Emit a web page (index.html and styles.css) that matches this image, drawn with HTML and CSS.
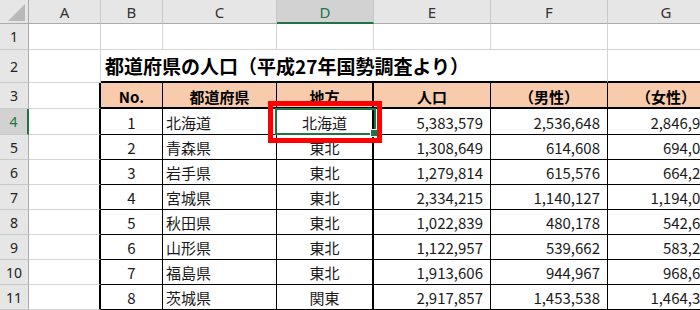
FILE: index.html
```html
<!DOCTYPE html>
<html lang="ja">
<head>
<meta charset="utf-8">
<title>都道府県の人口</title>
<link rel="stylesheet" href="styles.css">
</head>
<body>
<div class="sheet">
  <div class="corner"><span class="tri"></span></div>
  <div class="ch">A</div>
  <div class="ch">B</div>
  <div class="ch">C</div>
  <div class="ch sel">D</div>
  <div class="ch">E</div>
  <div class="ch">F</div>
  <div class="ch">G</div>

  <div class="rh">1</div>
  <div class="c"></div><div class="c"></div><div class="c"></div><div class="c"></div><div class="c"></div><div class="c"></div><div class="c"></div>

  <div class="rh r2">2</div>
  <div class="c r2"></div>
  <div class="c r2 title">都道府県の人口（平成27年国勢調査より）</div>
  <div class="c r2 top"></div>
  <div class="c r2 top"></div>

  <div class="rh">3</div>
  <div class="c edge"></div>
  <div class="t th">No.</div>
  <div class="t th">都道府県</div>
  <div class="t th thick">地方</div>
  <div class="t th">人口</div>
  <div class="t th">（男性）</div>
  <div class="t th">（女性）</div>

  <div class="rh sel r4">4</div>
  <div class="c edge r4"></div>
  <div class="t ctr r4">1</div>
  <div class="t lft r4">北海道</div>
  <div class="t ctr thick r4">北海道</div>
  <div class="t num r4">5,383,579</div>
  <div class="t num r4">2,536,648</div>
  <div class="t num r4">2,846,931</div>

  <div class="rh">5</div>
  <div class="c edge"></div>
  <div class="t ctr">2</div>
  <div class="t lft">青森県</div>
  <div class="t ctr thick">東北</div>
  <div class="t num">1,308,649</div>
  <div class="t num">614,608</div>
  <div class="t num">694,041</div>

  <div class="rh">6</div>
  <div class="c edge"></div>
  <div class="t ctr">3</div>
  <div class="t lft">岩手県</div>
  <div class="t ctr thick">東北</div>
  <div class="t num">1,279,814</div>
  <div class="t num">615,576</div>
  <div class="t num">664,238</div>

  <div class="rh">7</div>
  <div class="c edge"></div>
  <div class="t ctr">4</div>
  <div class="t lft">宮城県</div>
  <div class="t ctr thick">東北</div>
  <div class="t num">2,334,215</div>
  <div class="t num">1,140,127</div>
  <div class="t num">1,194,088</div>

  <div class="rh">8</div>
  <div class="c edge"></div>
  <div class="t ctr">5</div>
  <div class="t lft">秋田県</div>
  <div class="t ctr thick">東北</div>
  <div class="t num">1,022,839</div>
  <div class="t num">480,178</div>
  <div class="t num">542,661</div>

  <div class="rh">9</div>
  <div class="c edge"></div>
  <div class="t ctr">6</div>
  <div class="t lft">山形県</div>
  <div class="t ctr thick">東北</div>
  <div class="t num">1,122,957</div>
  <div class="t num">539,662</div>
  <div class="t num">583,295</div>

  <div class="rh">10</div>
  <div class="c edge"></div>
  <div class="t ctr">7</div>
  <div class="t lft">福島県</div>
  <div class="t ctr thick">東北</div>
  <div class="t num">1,913,606</div>
  <div class="t num">944,967</div>
  <div class="t num">968,639</div>

  <div class="rh">11</div>
  <div class="c edge"></div>
  <div class="t ctr">8</div>
  <div class="t lft">茨城県</div>
  <div class="t ctr thick">関東</div>
  <div class="t num">2,917,857</div>
  <div class="t num">1,453,538</div>
  <div class="t num">1,464,319</div>

  <div class="active"><span class="handle"></span></div>
  <div class="callout"></div>
</div>
</body>
</html>
```

FILE: styles.css
```css
* { box-sizing: border-box; }
html, body { margin: 0; padding: 0; background: #fff; overflow: hidden; }
body { width: 700px; height: 310px; }

.sheet {
  position: relative;
  display: grid;
  width: 725px;
  grid-template-columns: 29px 72px 62px 114px 97px 117px 117px 117px;
  grid-template-rows: 24px 26px 33px 26px 26px repeat(7, 25px);
  font-family: "Noto Sans CJK JP", "Noto Sans", sans-serif;
  font-size: 15px;
  color: #1a1a1a;
}

.sheet > div { display: flex; align-items: center; overflow: visible; white-space: nowrap; }

.corner {
  background: #e6e6e6;
  border-right: 1px solid #ababab;
  border-bottom: 1px solid #ababab;
  position: relative;
}
.tri {
  position: absolute;
  right: 3px;
  bottom: 2px;
  width: 0;
  height: 0;
  border-left: 17px solid transparent;
  border-bottom: 17px solid #b9b9b9;
}

.ch {
  background: #e6e6e6;
  border-right: 1px solid #c9c9c9;
  border-bottom: 1px solid #ababab;
  justify-content: center;
  font-family: "Noto Sans", sans-serif;
  font-size: 15px;
  color: #333;
  padding-top: 1px;
}
.ch.sel {
  background: #d2d2d2;
  color: #217346;
  border-bottom: 2px solid #217346;
}

.rh {
  background: #e6e6e6;
  border-right: 1px solid #ababab;
  border-bottom: 1px solid #c9c9c9;
  justify-content: center;
  font-family: "Noto Sans", sans-serif;
  font-size: 14px;
  color: #222;
}
.rh.sel {
  background: #d2d2d2;
  color: #217346;
  border-right: 2px solid #217346;
}

.c {
  border-right: 1px solid #d4d4d4;
  border-bottom: 1px solid #d4d4d4;
}
.c.edge { border-right: 2px solid #000; }
.c.top { border-bottom: 2px solid #000; }

.title {
  grid-column: span 4;
  border-bottom: 2px solid #000;
  border-right: 0;
  padding-left: 4px;
  font-size: 19px;
  font-weight: 700;
  color: #000;
}

.t {
  border-right: 1px solid #000;
  border-bottom: 1px solid #000;
  padding-top: 1px;
}
.t.thick { border-right: 2px solid #000; }

.th {
  background: #f8cbad;
  border-bottom: 2px solid #000;
  justify-content: center;
  font-weight: 700;
  color: #000;
  padding-top: 2px;
}

.ctr { justify-content: center; }
.lft { padding-left: 3px; }
.num { justify-content: flex-end; padding-right: 7px; }

.active {
  position: absolute;
  left: 275px;
  top: 108px;
  width: 101px;
  height: 27px;
  border: 2px solid #217346;
}
.handle {
  position: absolute;
  right: -3px;
  bottom: -3px;
  width: 6px;
  height: 6px;
  background: #217346;
  outline: 1px solid #fff;
}

.callout {
  position: absolute;
  left: 268px;
  top: 101px;
  width: 114px;
  height: 42px;
  border: 5px solid #ff0000;
}
```
